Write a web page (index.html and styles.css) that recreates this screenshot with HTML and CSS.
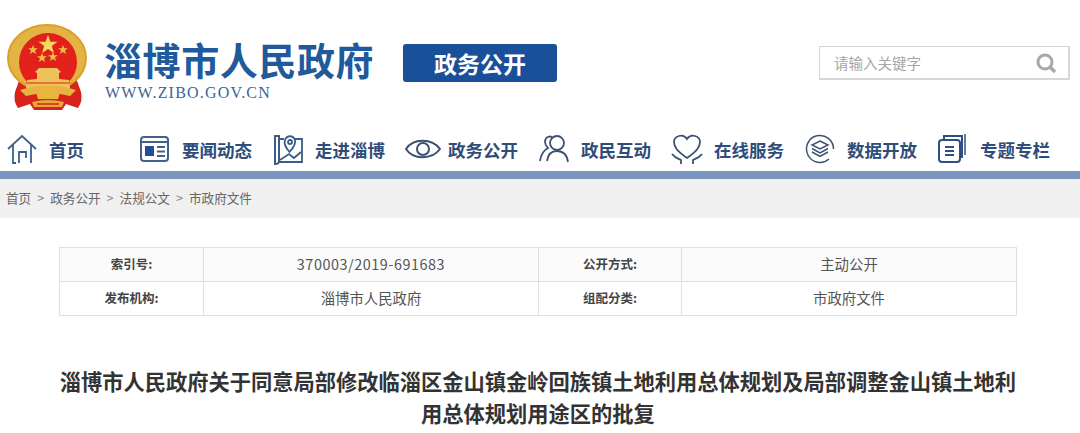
FILE: index.html
```html
<!DOCTYPE html>
<html lang="zh-CN">
<head>
    <meta charset="UTF-8">
    <title>淄博市人民政府</title>
    <link rel="stylesheet" href="styles.css">
</head>
<body>

<!-- Header -->
<div class="header">
    <svg class="emblem" width="82" height="88" viewBox="6 24 82 88">
        <!-- red drape -->
        <path d="M20 78 L15 92 Q13 101 18 108 L30 104 L34 110 L62 110 L66 104 L78 108 Q83 101 81 92 L76 78 Z" fill="#d8231b"/>
        <!-- wheat ring -->
        <ellipse cx="47" cy="58" rx="39" ry="33" fill="#e3b343" stroke="#d9a02a" stroke-width="2"/>
        <circle cx="48" cy="62" r="29" fill="#e2211a"/>
        <path d="M48 35 L50.400 41.800 L57.500 41.800 L51.800 46.100 L53.900 53 L48 48.900 L42.100 53 L44.200 46.100 L38.500 41.800 L45.600 41.800 Z" fill="#f7d85e"/>
        <path d="M33 45 l1.300 3.300 3.600 0 -2.900 2.200 1.100 3.500 -3.100 -2.100 -3.100 2.100 1.100 -3.500 -2.900 -2.200 3.600 0 Z" fill="#f0bb48"/>
        <path d="M63 45 l1.300 3.300 3.600 0 -2.900 2.200 1.100 3.500 -3.100 -2.100 -3.100 2.100 1.100 -3.500 -2.900 -2.200 3.600 0 Z" fill="#f0bb48"/>
        <path d="M42 53 l1.300 3.300 3.600 0 -2.900 2.200 1.100 3.500 -3.100 -2.100 -3.100 2.100 1.100 -3.500 -2.900 -2.200 3.600 0 Z" fill="#f0bb48"/>
        <path d="M53 52 l1.300 3.300 3.600 0 -2.900 2.200 1.100 3.500 -3.100 -2.100 -3.100 2.100 1.100 -3.500 -2.900 -2.200 3.600 0 Z" fill="#f0bb48"/>
        <!-- gate -->
        <path d="M39 68 L57 68 L61 72 L59 73 L59 79 L69 80 L70 88 L26 88 L27 80 L37 79 L37 73 L35 72 Z" fill="#eec25a"/>
        <path d="M26 83 H70" stroke="#e2211a" stroke-width="1"/>
        <!-- gear and ribbon -->
        <path d="M20 90 Q48 81 76 90 L70 96 Q48 90 26 96 Z" fill="#e7b443"/>
        <path d="M36 92 Q48 86 60 92 L58 99 L38 99 Z" fill="#e9b63e"/>
        <path d="M32 102 Q48 98 64 102 L62 107 L34 107 Z" fill="#e5a938"/>
        <path d="M37 104 H59" stroke="#d8231b" stroke-width="1.500"/>
    </svg>
    <div class="site-name">
        <h1>淄博市人民政府</h1>
        <p>WWW.ZIBO.GOV.CN</p>
    </div>
    <div class="section-badge">政务公开</div>
    <div class="search-box">
        <span>请输入关键字</span>
        <svg width="22" height="22" viewBox="0 0 22 22" fill="none" stroke="#a8a8a8">
            <circle cx="10" cy="10" r="7" stroke-width="3"/>
            <path d="M14.500 14.500 L20 20" stroke-width="3.500"/>
        </svg>
    </div>
</div>

<!-- Nav -->
<div class="nav">
    <a class="nav-item">
        <svg width="32" height="32" viewBox="0 0 32 32" fill="none" stroke="#3d5f8c" stroke-width="1.800">
            <path d="M2 16 L16 3 L30 16"/><path d="M7 12 V30 H10"/><path d="M25 12 V30"/><path d="M13 30 V19 H20 V25"/>
        </svg>
        首页
    </a>
    <a class="nav-item">
        <svg width="32" height="32" viewBox="0 0 32 32" fill="none" stroke="#43618a" stroke-width="2">
            <rect x="2" y="4" width="27" height="24" rx="3"/><path d="M2 9 H29"/>
            <rect x="6" y="13" width="9" height="10" fill="#1f4f96" stroke="none"/>
            <path d="M18 14 H26 M18 18.500 H26 M18 23 H26"/>
        </svg>
        要闻动态
    </a>
    <a class="nav-item">
        <svg width="32" height="32" viewBox="0 0 32 32" fill="none" stroke="#3b5c88" stroke-width="1.800">
            <path d="M3 3 H7 V28 Q7 31 3 31 Z" stroke-width="2"/><path d="M7 6 H12 M23 6 H30 V29 H7"/>
            <path d="M17.500 19 C13 14 12 10 13 7 C15 2 21 2 23 7 C24 10 22 14 17.500 19 Z"/><circle cx="18" cy="9" r="2"/>
            <path d="M8 27 L17 21 L22 25 L29 19"/>
        </svg>
        走进淄博
    </a>
    <a class="nav-item">
        <svg width="36" height="32" viewBox="0 0 36 32" fill="none" stroke="#3a5170" stroke-width="2">
            <path d="M1 16 C8 5 27 5 35 16 C27 27 8 27 1 16 Z"/><circle cx="18" cy="16" r="6"/>
        </svg>
        政务公开
    </a>
    <a class="nav-item">
        <svg width="32" height="32" viewBox="0 0 32 32" fill="none" stroke="#3a5170" stroke-width="1.800">
            <path d="M15 5 C12 2 7 4 7 9 C7 12 9 14 10 15 C6 17 3 21 2 28"/>
            <circle cx="19" cy="10" r="7"/><path d="M9 28 C10 21 14 18 19 18 C25 18 29 22 30 29"/>
        </svg>
        政民互动
    </a>
    <a class="nav-item">
        <svg width="32" height="32" viewBox="0 0 32 32" fill="none" stroke="#3a5170" stroke-width="1.800">
            <path d="M16 25 C6 18 3 14 3 9 C3 3 12 0 16 6 C20 0 29 3 29 9 C29 14 26 18 16 25 Z"/>
            <path d="M1 21 C4 25 8 26 10 27 V31 M31 21 C28 25 24 26 22 27 V31"/>
        </svg>
        在线服务
    </a>
    <a class="nav-item">
        <svg width="32" height="32" viewBox="0 0 32 32" fill="none" stroke="#3a5170" stroke-width="1.500">
            <path d="M25 26 A13.500 13.500 0 1 1 29.500 16" />
            <path d="M16 8 L24 12 L16 16 L8 12 Z"/><path d="M8 15.500 L16 20 L24 15.500"/><path d="M8 19 L16 23.500 L24 19"/>
        </svg>
        数据开放
    </a>
    <a class="nav-item">
        <svg width="32" height="32" viewBox="0 0 32 32" fill="none" stroke="#2e5080" stroke-width="2">
            <rect x="2" y="7" width="21" height="22" rx="3"/><path d="M7 7 V3 H25 V25"/><path d="M28 1 V22" stroke-width="1.500"/>
            <path d="M8 14 H17 M8 18 H17 M8 22 H17"/>
        </svg>
        专题专栏
    </a>
</div>

<!-- Breadcrumb -->
<div class="breadcrumb">
    <a>首页</a><span>&gt;</span><a>政务公开</a><span>&gt;</span><a>法规公文</a><span>&gt;</span><a>市政府文件</a>
</div>

<!-- Main Content -->
<div class="main-content">
    <table class="info-table">
        <tr>
            <th>索引号:</th>
            <td class="num">370003/2019-691683</td>
            <th>公开方式:</th>
            <td>主动公开</td>
        </tr>
        <tr>
            <th>发布机构:</th>
            <td>淄博市人民政府</td>
            <th>组配分类:</th>
            <td>市政府文件</td>
        </tr>
    </table>
    <h2 class="doc-title">淄博市人民政府关于同意局部修改临淄区金山镇金岭回族镇土地利用总体规划及局部调整金山镇土地利用总体规划用途区的批复</h2>
</div>

</body>
</html>
```

FILE: styles.css
```css
/* Base Styles */
* {
    margin: 0;
    padding: 0;
    box-sizing: border-box;
}

body {
    height: 433px;
    overflow: hidden;
    background-color: #fff;
    font-family: "Noto Sans CJK SC", "Noto Sans", sans-serif;
}

/* Header */
.header {
    display: flex;
    align-items: flex-start;
    height: 132px;
    padding: 24px 10px 0 6px;
}

.emblem {
    flex: none;
}

.site-name {
    margin: 13px 0 0 16px;
    width: 299px;
}

.site-name h1 {
    font-size: 38px;
    line-height: 44px;
    font-weight: 700;
    letter-spacing: 0.6px;
    color: #1f5a9c;
}

.site-name p {
    margin: 2px 0 0 1px;
    font-family: "Liberation Serif", serif;
    font-size: 16px;
    line-height: 20px;
    letter-spacing: 1.200px;
    color: #3a6596;
}

.section-badge {
    margin-top: 20px;
    width: 154px;
    height: 38px;
    background: #1a4f99;
    border-radius: 3px;
    color: #fff;
    font-size: 23px;
    font-weight: 700;
    line-height: 38px;
    text-align: center;
}

.search-box {
    display: flex;
    align-items: center;
    justify-content: space-between;
    margin: 22px 0 0 262px;
    width: 251px;
    height: 34px;
    padding: 0 11px 0 14px;
    border: 2px solid #d6d6d6;
    border-width: 1px 2px 2px 1px;
    color: #a6a6a6;
    font-size: 14.500px;
}

/* Nav */
.nav {
    display: grid;
    grid-template-columns: repeat(8, 133px);
    padding-left: 6px;
    height: 39px;
}

.nav-item {
    display: flex;
    align-items: center;
    height: 34px;
    color: #2f4d7a;
    font-size: 17.500px;
    font-weight: 700;
    white-space: nowrap;
}

.nav-item svg {
    flex: none;
    margin-right: 11px;
}

.nav-item:nth-child(4) svg {
    margin-right: 7px;
}

/* Breadcrumb */
.breadcrumb {
    display: flex;
    align-items: center;
    gap: 6px;
    height: 47px;
    padding: 0 0 2px 6px;
    background: #f0f0f0;
    border-top: 8px solid #7a96c0;
    color: #666;
    font-size: 12.600px;
}

.breadcrumb span {
    color: #888;
}

/* Main Content */
.main-content {
    padding: 29px 63px 0 59px;
}

.info-table {
    width: 958px;
    table-layout: fixed;
    border-collapse: collapse;
    font-size: 14.400px;
    text-align: center;
}

.info-table th,
.info-table td {
    height: 34px;
    padding-bottom: 2px;
    border: 1px solid #e0e0e0;
    font-weight: 400;
    color: #555;
}

.info-table th {
    width: 144px;
    font-size: 12.500px;
    font-weight: 700;
    color: #444;
}

.info-table th:nth-child(3) {
    width: 143px;
}

.info-table .num {
    letter-spacing: 0.550px;
}

.info-table tr:first-child th,
.info-table tr:first-child td {
    background: #fbfbfb;
}

.doc-title {
    margin-top: 49px;
    font-size: 21.250px;
    line-height: 32px;
    font-weight: 700;
    color: #333;
    text-align: center;
}
```
